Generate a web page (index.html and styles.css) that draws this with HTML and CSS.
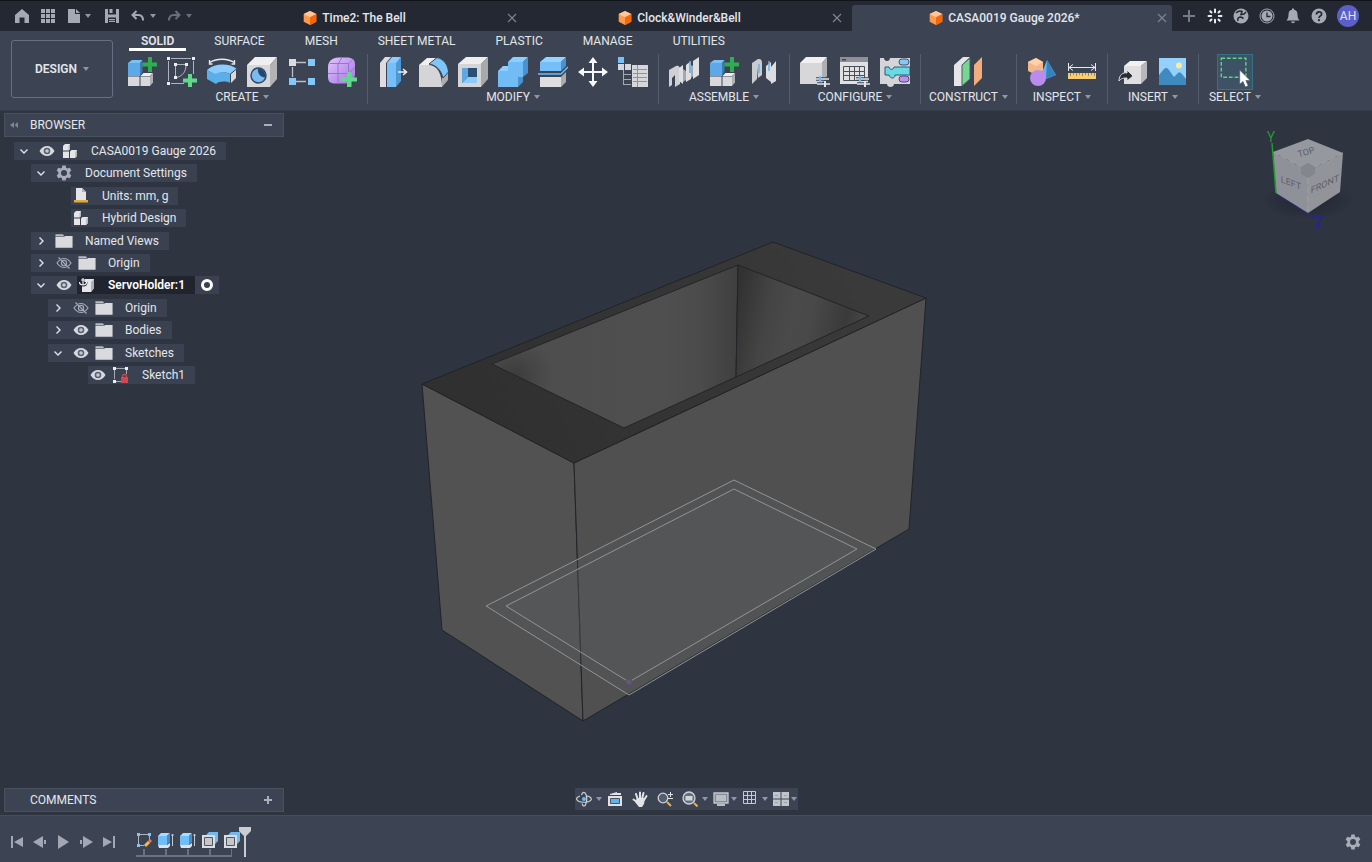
FILE: index.html
```html
<!DOCTYPE html>
<html lang="en">
<head>
<meta charset="utf-8">
<title>CASA0019 Gauge 2026*</title>
<link rel="stylesheet" href="styles.css">
</head>
<body>
<svg class="defs" aria-hidden="true">
  <defs>
    <linearGradient id="gPurple" x1="0" y1="0" x2="1" y2="1"><stop offset="0" stop-color="#e2c5ff"/><stop offset="1" stop-color="#a274e0"/></linearGradient>
  </defs>
  <symbol id="doc" viewBox="0 0 14 16"><path fill="#ff9a4d" d="M7 1l6.300 3v7.800L7 15 .7 11.800V4z"/><path fill="#ffc79b" d="M7 1l6.300 3L7 7.300.7 4z"/><path fill="#f4680b" d="M7 7.300L13.300 4v7.800L7 15z"/></symbol>
  <symbol id="eye" viewBox="0 0 16 12"><path fill="#d6d9df" d="M.5 6C2.500 2.600 5 1 8 1s5.500 1.600 7.500 5C13.500 9.400 11 11 8 11S2.500 9.400.5 6z"/><circle cx="8" cy="6" r="3.300" fill="#596170"/><circle cx="8" cy="6" r="1.800" fill="#c3c7cf"/></symbol>
  <symbol id="eyeoff" viewBox="0 0 16 12"><path fill="none" stroke="#a3a9b4" stroke-width="1.200" d="M1 6c2-3 4.300-4.500 7-4.500S13 3 15 6c-2 3-4.300 4.500-7 4.500S3 9 1 6zM2.500.5l11 11"/><circle cx="8" cy="6" r="2.600" fill="none" stroke="#a3a9b4" stroke-width="1.200"/></symbol>
  <symbol id="folder" viewBox="0 0 16 14"><path fill="#b7bac0" d="M.5 1h6.500l1.500 2H.5z"/><path fill="#d9dadd" d="M.5 3.600H8l1-1h6.500V13H.5z"/></symbol>
  <symbol id="down" viewBox="0 0 10 10"><path fill="none" stroke="#dfe2e8" stroke-width="1.400" d="M1.500 3.500L5 7l3.500-3.500"/></symbol>
  <symbol id="right" viewBox="0 0 10 10"><path fill="none" stroke="#dfe2e8" stroke-width="1.400" d="M3.500 1.500L7 5 3.500 8.500"/></symbol>
  <symbol id="gear" viewBox="0 0 16 16"><path fill="#a9adb9" fill-rule="evenodd" d="M6.400.5h3.200l.5 2.300 1.300.8 2.300-.8 1.600 2.800L13.600 7.200v1.600l1.700 1.600-1.600 2.800-2.300-.8-1.300.8-.5 2.300H6.400l-.5-2.300-1.300-.8-2.300.8L.7 10.400l1.700-1.600V7.200L.7 5.600l1.600-2.800 2.300.8 1.300-.8zM8 5a3 3 0 100 6 3 3 0 000-6z"/></symbol>
  <symbol id="cubes" viewBox="0 0 16 16"><path fill="#e6e6e8" d="M1 3l2-2h5v5L6.500 7.500H1zM1 8.500h6V15H1zM8 8.500L9.500 7H15v6l-2 2H8z"/><path fill="#b4b7bd" d="M6.500 3L8 1v5L6.500 7.500zM13.200 9L15 7v6l-1.800 2z"/></symbol>
  <symbol id="component" viewBox="0 0 30 30"><path fill="#7cc0f5" d="M1 6l4-3h10.500L13 6z"/><path fill="#5ba9e6" d="M1 6h12v13H1z"/><path fill="#3a7bb2" d="M13 6l2.500-3v12L13 19z"/><path fill="#d9d9db" d="M1 19.500h11.500V29H1zM13.500 19.500H23V29h-9.500z"/><path fill="#eeeeef" d="M13.500 19l3-3H26l-3 3z"/><path fill="#aeb0b5" d="M23 19.500l3-3.500v9.500L23 29z"/><path fill="#2fae4f" d="M21 0h4v5.500h5.500v4H25V15h-4V9.500h-5.500v-4H21z"/></symbol>
  <symbol id="sliders" viewBox="0 0 14 12"><path stroke="#3c4453" stroke-width="3.500" d="M0 4h14M1 9h13"/><path stroke="#e4e5e8" stroke-width="1.400" d="M0 4h13M1 9h13"/><path stroke="#71bdf5" stroke-width="2" d="M4 1v6"/><path stroke="#e4e5e8" stroke-width="2" d="M9 6v6"/></symbol>
  <symbol id="extrude" viewBox="0 0 16 16"><path fill="#e1e2e5" d="M0 13h9l3-2v3l-2 2H1z"/><path fill="#71bdf5" d="M0 4h9v9H0z"/><path fill="#a9dcff" d="M0 4l3-3h9L9 4z"/><path fill="#458dc7" d="M9 4l3-3v9l-3 3z"/><path stroke="#c4c8d0" d="M14.500 2v12M13.500 3.500l1-1.500 1 1.500" fill="none"/></symbol>
  <symbol id="shell" viewBox="0 0 16 16"><path fill="#71b9ee" d="M4 3l3-3h9v9l-3 3V3z"/><path fill="#dcdde0" d="M0 3h13v13H0z"/><path fill="#c5c7cb" stroke="#505762" d="M2.500 5.500h8v8h-8z"/></symbol>
</svg>

<header class="titlebar">
  <nav class="quick" aria-label="Quick access">
    <button class="ib" aria-label="Home"><svg viewBox="0 0 16 16"><path d="M8 1l7 6v8h-4.500V9.500h-5V15H1V7z"/></svg></button>
    <button class="ib" aria-label="Data panel"><svg viewBox="0 0 16 16"><path d="M1 1h4v4H1zm5 0h4v4H6zm5 0h4v4h-4zM1 6h4v4H1zm5 0h4v4H6zm5 0h4v4h-4zM1 11h4v4H1zm5 0h4v4H6zm5 0h4v4h-4z"/></svg></button>
    <button class="ib drop" aria-label="File"><svg viewBox="0 0 16 16"><path d="M2 1h7v5h5v9H2zM10 1l4 4h-4z"/></svg><i class="caret"></i></button>
    <button class="ib" aria-label="Save"><svg viewBox="0 0 16 16"><path fill-rule="evenodd" d="M1 1h14v14H1zm3 0v5.500h8V1zm0 14h8V9.500H4z"/><path d="M5.500 1h3v4h-3zM5 11h6v1.200H5zm0 2h6v1H5z"/></svg></button>
    <button class="ib drop undo" aria-label="Undo"><svg viewBox="0 0 16 16"><path fill="none" stroke="currentColor" stroke-width="2" d="M3 7h5.500c3 0 4.500 2 4.500 5.500M6.500 3L2.500 7l4 4"/></svg><i class="caret"></i></button>
    <button class="ib drop redo" aria-label="Redo"><svg viewBox="0 0 16 16"><path fill="none" stroke="currentColor" stroke-width="2" d="M13 7H7.500C4.500 7 3 9 3 12.500M9.500 3l4 4-4 4"/></svg><i class="caret"></i></button>
  </nav>
  <div class="files" role="tablist">
    <div class="file"><button class="name" role="tab"><svg><use href="#doc"/></svg>Time2: The Bell</button><button class="x" aria-label="Close Time2"><svg viewBox="0 0 10 10"><path d="M1 1l8 8M9 1L1 9"/></svg></button></div>
    <div class="file"><button class="name" role="tab"><svg><use href="#doc"/></svg>Clock&amp;Winder&amp;Bell</button><button class="x" aria-label="Close Clock"><svg viewBox="0 0 10 10"><path d="M1 1l8 8M9 1L1 9"/></svg></button></div>
    <div class="file on"><button class="name" role="tab" aria-selected="true"><svg><use href="#doc"/></svg>CASA0019 Gauge 2026*</button><button class="x" aria-label="Close Gauge"><svg viewBox="0 0 10 10"><path d="M1 1l8 8M9 1L1 9"/></svg></button></div>
  </div>
  <nav class="account" aria-label="Account">
    <button class="ib dim" aria-label="New design"><svg viewBox="0 0 16 16"><path d="M7 2h2v5h5v2H9v5H7V9H2V7h5z"/></svg></button>
    <button class="ib" aria-label="Assistant"><svg viewBox="0 0 16 16" fill="none" stroke="#eceef1" stroke-width="2" stroke-linecap="round"><path d="M8 1.500v2.800M11.500 4.500l1.200-1.200M11.800 8h2.700M11.500 11.500l1.200 1.200M8 11.700v2.800M4.500 11.500l-1.200 1.200M1.500 8h2.700M4.500 4.500L3.300 3.300"/></svg></button>
    <button class="ib" aria-label="Extensions"><svg viewBox="0 0 16 16"><circle cx="8" cy="8" r="7.500"/><path stroke="#232832" stroke-width="1.500" fill="none" d="M3 5c2-2 4-2.500 6-1.500l-1 3 3-.5 2-2M5 13c-1-3 1-4 3-4M8 9l2.500 1.500"/></svg></button>
    <button class="ib" aria-label="Job status"><svg viewBox="0 0 16 16"><circle cx="8" cy="8" r="7" fill="none" stroke="currentColor"/><circle cx="8" cy="8" r="5.500"/><path fill="none" stroke="#232832" stroke-width="1.300" d="M8 4.500V8.500h3.500"/></svg></button>
    <button class="ib" aria-label="Notifications"><svg viewBox="0 0 16 16"><path d="M7 .5h2v1.300c2.500.5 3.500 2.200 3.500 4.700 0 3 .7 4.500 2 6H1.500c1.300-1.500 2-3 2-6C3.500 4 4.500 2.300 7 1.800zM6 13.500h4c-.3 2.200-3.700 2.200-4 0z"/></svg></button>
    <button class="ib" aria-label="Help"><svg viewBox="0 0 16 16"><circle cx="8" cy="8" r="7.500"/><path fill="none" stroke="#232832" stroke-width="1.800" d="M5.500 6.500C5.500 3 10.800 3 10.600 6.200 10.500 7.800 8 8 8 10"/><circle cx="8" cy="12.200" r="1.100" fill="#232832"/></svg></button>
    <button class="avatar">AH</button>
  </nav>
</header>

<section class="ribbon">
  <button class="design">DESIGN<i class="caret"></i></button>
  <div class="panel">
    <nav class="modes" role="tablist">
      <button class="on" role="tab" aria-selected="true">SOLID</button><button role="tab">SURFACE</button><button role="tab">MESH</button><button role="tab">SHEET METAL</button><button role="tab">PLASTIC</button><button role="tab">MANAGE</button><button role="tab">UTILITIES</button>
    </nav>
    <div class="groups">
      <div class="group"><div class="tools">
        <button aria-label="New component"><svg><use href="#component"/></svg></button>
        <button aria-label="Create sketch"><svg viewBox="0 0 30 30"><path fill="none" stroke="#aeb4be" d="M4 1.500h20M1.500 4v20M4 26.500h13M26.500 4v13M8.500 7.500v13M10 7.500h9c0 7-3 11-9 13"/><path fill="#eceef1" d="M0 0h3v3H0zM25 0h3v3h-3zM0 25h3v3H0zM7 6h3v3H7zM18 6h3v3h-3zM7 19h3v3H7z"/><path fill="#5fd98a" d="M21 17h4v4.500h5v4h-5V30h-4v-4.500h-5v-4h5z"/></svg></button>
        <button aria-label="Extrude"><svg viewBox="0 0 30 30"><path fill="#8ccbff" d="M0 13C8 6 22 6 30 12l-7 5c-4-2-11-2-14.500 1z"/><path fill="#5aaeea" d="M0 13l8.500 4C12 14.500 18 14.500 23 17v9c-4-2-11-2-14 1L0 22z"/><path fill="#d9d9db" stroke="#3f444f" d="M23.500 17l6-5v9l-6 6z"/><path fill="none" stroke="#e8eaee" stroke-width="1.300" d="M2 6c7-5 19-5 26 0M2.500 3v4h3M27.500 3v4h-3"/></svg></button>
        <button aria-label="Hole"><svg viewBox="0 0 30 30"><path fill="#efeff0" d="M0 8l8-8h22l-7 8z"/><path fill="#d8d8da" d="M0 8h23v22H0z"/><path fill="#b3b3b6" d="M23 8l7-8v22l-7 8z"/><circle cx="11.500" cy="18.500" r="7.500" fill="#79bdf0" stroke="#304a66" stroke-width="1.500"/><path fill="#28486b" d="M11 11.500a7 7 0 017 9c-4 0-8-4-7-9z"/></svg></button>
        <button aria-label="Pattern"><svg viewBox="0 0 30 30"><path fill="none" stroke="#b9bec7" stroke-width="1.300" d="M9 5.500h10M9 24.500h10M5.500 10v10"/><path fill="#dadbdd" d="M2 2h7v7H2z"/><path fill="#83c8fb" d="M21 2h7v7h-7zM2 21h7v7H2zM21 21h7v7h-7z"/></svg></button>
        <button aria-label="Create form"><svg viewBox="0 0 30 30"><path fill="url(#gPurple)" d="M1 10c0-6 5-9.500 10-9.500h9c5 0 8 2 8 7v9c0 6-4 10-10 10H8c-5 0-7-2-7-7z"/><path fill="none" stroke="#9a72cf" d="M1 16.500h20l7-6M11 27V7l4-6.500M3 6.500h19l4-4M21.500 26V6.500"/><path fill="#5fd98a" d="M20 15h4.500v5.500H30v4h-5.500V30H20v-5.500h-5.500v-4H20z"/></svg></button>
      </div><button class="label">CREATE<i class="caret"></i></button></div>

      <div class="group"><div class="tools">
        <button aria-label="Press pull"><svg viewBox="0 0 30 30"><path fill="#dddde0" d="M2 6l5-6h6L8 6v24H2z"/><path fill="#8ccbff" d="M9 6l5-6h9l-4 6z"/><path fill="#76bff8" d="M9 6h9v24H9z"/><path fill="#4e98d4" d="M18 6l5-6v24l-5 6z"/><path fill="none" stroke="#eef0f3" stroke-width="1.500" d="M20 15h8M25 12l3.500 3L25 18"/></svg></button>
        <button aria-label="Fillet"><svg viewBox="0 0 30 30"><path fill="#efeff0" d="M1 8l8-7h10l-8 7z"/><path fill="#d5d5d7" d="M1 8h9c9 0 14 8 14 22H1z"/><path fill="#adadb1" d="M24 21l6-7v9l-6 7z"/><path fill="#7fc5fa" stroke="#3c4453" d="M11 7l8-6.500C26 2 30 8 30.500 15L25 21C23 13 18 8 11 7z"/></svg></button>
        <button aria-label="Shell"><svg viewBox="0 0 30 30"><path fill="#eeeeef" d="M0 7l8-7h22l-7 7z"/><path fill="#d5d5d7" d="M0 7h23v23H0z"/><path fill="#a9a9ac" d="M23 7l7-7v22l-7 8z"/><path fill="#2b4f73" d="M4 11h15v15H4z"/><path fill="#5fa8df" d="M4 11h6v9l-6 6z"/><path fill="#8ccbff" d="M10 20h9v6H4z"/></svg></button>
        <button aria-label="Combine"><svg viewBox="0 0 30 30"><path fill="#8dceff" d="M10 5l5-5h15l-5 5zM0 14l5-5h5v5z"/><path fill="#72bcf5" d="M10 5h15v15h-5v10H0V14h10z"/><path fill="#4792cf" d="M25 5l5-5v16l-5 4zM20 20h5v5l-5 5z"/></svg></button>
        <button aria-label="Split body"><svg viewBox="0 0 30 30"><path fill="#97d3ff" d="M2 5l6-5h20l-5 5z"/><path fill="#75bef7" d="M2 5h21v9H2z"/><path fill="#4792cf" d="M23 5l5-5v9l-5 5z"/><path fill="none" stroke="#6abcf5" stroke-width="1.500" d="M0 17h23l7-7"/><path fill="#dedee0" d="M2 20h21v10H2z"/><path fill="#ababaf" d="M23 20l5-5v10l-5 5z"/></svg></button>
        <button aria-label="Move"><svg viewBox="0 0 30 30"><path fill="none" stroke="#f6f7f8" stroke-width="2" d="M15 4v22M4 15h22"/><path fill="#f6f7f8" d="M15 0l4.500 6h-9zM15 30l4.500-6h-9zM0 15l6-4.500v9zM30 15l-6-4.500v9z"/></svg></button>
        <button aria-label="Manage"><svg viewBox="0 0 30 30"><path fill="#78c1f6" d="M0 0h6v6H0z"/><path fill="#d6d7da" d="M0 7h6v6H0zM7 7h6v6H7zM14 8h16v22H14z"/><path fill="none" stroke="#a4a9b3" d="M5.500 13v15M5 17.500h8M5 22.500h8M5 27.500h8"/><path stroke="#8e939b" d="M15 12.500h14M15 16.500h14M15 20.500h14M15 24.500h14M19.500 8v22"/></svg></button>
      </div><button class="label">MODIFY<i class="caret"></i></button></div>

      <div class="group"><div class="tools">
        <button aria-label="Joint"><svg viewBox="0 0 30 30"><path fill="#cfd0d3" d="M0 13l7-4c3-1 4 1 4 4v14l-5 3V18l-3 3v7l-3 2z"/><path fill="#dedfe1" d="M10 11l4-3v19l-4-3zM17 8l5-4v18l-5 3zM24 4l6-4v18l-6 4z"/><path fill="#a5a8ae" d="M14 12l3 2v9l-3 2zM22 8l2 1v10l-2 2z"/><path stroke="#58a6e5" stroke-width="1.500" d="M21 4v12"/></svg></button>
        <button aria-label="Assemble component"><svg><use href="#component"/></svg></button>
        <button aria-label="Joint origin"><svg viewBox="0 0 30 30"><path fill="#c9cbce" d="M3 6l6-4c4 0 4 2 4 5v11l-4 3V10l-1 12-5 5z"/><path fill="#dcdde0" d="M17 9l5-4v20l-5-4zM22 10l5-6v20l-5 3z"/><path stroke="#66b2ed" stroke-width="1.500" d="M10 7v9M20 4v10"/></svg></button>
      </div><button class="label">ASSEMBLE<i class="caret"></i></button></div>

      <div class="group"><div class="tools">
        <button aria-label="Configure"><svg viewBox="0 0 30 30"><path fill="#f0f0f1" d="M0 6l6-6h21l-5 6z"/><path fill="#d7d7d9" d="M0 6h22v21H0z"/><path fill="#afb0b3" d="M22 6l5-6v19l-5 8z"/><use href="#sliders" x="16" y="18" width="14" height="12"/></svg></button>
        <button aria-label="Configuration table"><svg viewBox="0 0 30 30"><path fill="#e0e1e3" d="M0 0h28v27H0z"/><path fill="#8c9097" d="M0 0h28v5H0z"/><path fill="#40454e" d="M2 2h4v1.500H2z"/><path fill="none" stroke="#4a4f59" d="M3.500 9.500h21v14h-21zM4 14.500h20M4 18.500h20M9.500 9v14M14.500 9v14M19.500 9v14"/><use href="#sliders" x="16" y="18" width="14" height="12"/></svg></button>
        <button aria-label="Rules"><svg viewBox="0 0 30 30"><path fill="#d3d5d9" d="M0 1h4c0 4 6 4 6 0h20v26H14c0 4-7 4-7 0H0z"/><rect x="19" y="2" width="10" height="6" rx="3" fill="#86c7f5" stroke="#40506a"/><rect x="19" y="19" width="10" height="6" rx="3" fill="#bb91ee" stroke="#554572"/><path fill="#69d9e3" stroke="#35566a" d="M5 10h4c0 3 5 3 5 0h16v8H15c0 4-5 4-6 0H5z"/></svg></button>
      </div><button class="label">CONFIGURE<i class="caret"></i></button></div>

      <div class="group plane"><div class="tools">
        <button aria-label="Offset plane"><svg viewBox="0 0 30 30"><path fill="#e5e5e7" d="M1 8l9-8h7L9 8v21H1z"/><path fill="#77d696" stroke="#4a5a5c" d="M9 8l8-7v21l-8 7z"/><path fill="#f2ad7e" d="M21 8l8-8v21l-8 8z"/></svg></button>
      </div><button class="label">CONSTRUCT<i class="caret"></i></button></div>

      <div class="group"><div class="tools">
        <button aria-label="Analysis"><svg viewBox="0 0 30 30"><path fill="#f5b789" d="M1 5l8-4 7 4v9l-7 4-8-4z"/><path fill="#ffd1ab" d="M1 5l8-4 7 4-7 4z"/><path fill="#67b5ef" d="M20 3l9 15-10 4-5-4z"/><path fill="#3782bd" d="M20 3l9 15-10 4z"/><circle cx="11" cy="21" r="8" fill="#b98ced"/></svg></button>
        <button aria-label="Measure"><svg viewBox="0 0 30 30"><path fill="none" stroke="#e6e8ec" d="M1.500 6v8M28.500 6v8M2 10.500h26M6 7.500l-4 3 4 3M24 7.500l4 3-4 3"/><path fill="#f5cc72" d="M1 16h28v6H1z"/><path stroke="#a08a55" d="M3.500 16v3M6.500 16v2M9.500 16v3M12.500 16v2M15.500 16v3M18.500 16v2M21.500 16v3M24.500 16v2M27.500 16v3"/></svg></button>
      </div><button class="label">INSPECT<i class="caret"></i></button></div>

      <div class="group"><div class="tools">
        <button aria-label="Insert derive"><svg viewBox="0 0 30 30"><path fill="#f1f1f2" d="M6 9l6-5h17l-6 5z"/><path fill="#dfdfe1" d="M6 9h17v18H6z"/><path fill="#b7b8bb" d="M23 9l6-5v17l-6 6z"/><path fill="#292d34" stroke="#dfdfe1" d="M1 24c0-6 4-9 8-8v-3l6 6-6 5v-3c-3 0-6 0-8 3z"/></svg></button>
        <button aria-label="Insert image"><svg viewBox="0 0 30 30"><path fill="#93d1fa" d="M1 1h27v27H1z"/><path fill="#3f8bc0" d="M1 18l5-6c2-2 4-1 5 1l5 7 4-4c2-1 3 0 4 1l4 5v6H1z"/><circle cx="21" cy="8.500" r="3" fill="#ffe99a"/></svg></button>
      </div><button class="label">INSERT<i class="caret"></i></button></div>

      <div class="group"><div class="tools">
        <button class="picked" aria-label="Select"><svg viewBox="0 0 36 36"><path fill="none" stroke="#5fd28a" stroke-width="1.500" stroke-dasharray="4 2" d="M3.500 3.500h26v20h-26z"/><path fill="#fff" stroke="#44515f" stroke-width=".6" d="M23 16v15l3.500-3 2.500 6 3-1.500-2.500-5.500H34z"/></svg></button>
      </div><button class="label">SELECT<i class="caret"></i></button></div>
    </div>
  </div>
</section>

<main class="viewport">
  <svg class="scene" viewBox="0 111 1372 704" role="img" aria-label="Servo holder model">
    <defs>
      <linearGradient id="topFace" gradientUnits="userSpaceOnUse" x1="500" y1="430" x2="860" y2="270"><stop offset="0" stop-color="#303030"/><stop offset="1" stop-color="#3a3a3a"/></linearGradient>
      <linearGradient id="wallA" gradientUnits="userSpaceOnUse" x1="492" y1="0" x2="738" y2="0"><stop offset="0" stop-color="#4d4d4d"/><stop offset=".7" stop-color="#4f4f4f"/><stop offset=".85" stop-color="#4b4b4b"/><stop offset="1" stop-color="#3f3f3f"/></linearGradient>
      <linearGradient id="wallB" gradientUnits="userSpaceOnUse" x1="737" y1="300" x2="860" y2="325"><stop offset="0" stop-color="#323232"/><stop offset=".25" stop-color="#444"/><stop offset=".45" stop-color="#4a4a4a"/><stop offset=".6" stop-color="#494949"/><stop offset=".88" stop-color="#3a3a3a"/><stop offset="1" stop-color="#444"/></linearGradient>
      <radialGradient id="corner" gradientUnits="userSpaceOnUse" cx="516" cy="376" r="38"><stop offset="0" stop-color="#303030" stop-opacity=".6"/><stop offset=".5" stop-color="#303030" stop-opacity=".25"/><stop offset="1" stop-color="#303030" stop-opacity="0"/></radialGradient>
    </defs>
    <g stroke="#222427" stroke-linejoin="round">
      <path fill="#525252" d="M422 384L574 463 583 721 442 630z"/>
      <path fill="#505050" d="M574 463L926 298 909 529 583 721z"/>
      <path fill="url(#topFace)" d="M773 242L926 298 574 463 422 384z"/>
      <path fill="url(#wallA)" d="M492 364L738 265 736 377 624 428z"/>
      <path fill="url(#corner)" stroke="none" d="M493 364L738 265 736 377 624 428z"/>
      <path fill="url(#wallB)" d="M738 265L869 316 736 377z"/>
    </g>
    <g fill="#5c5e66" fill-opacity=".2" stroke="#929496"><path d="M734 480L876 549 629 695 486 606z"/><path d="M734 489L857 549 629 682 506 606z"/></g>
    <circle cx="629" cy="682" r="3" fill="#625a72" stroke="#5a4f70"/>
  </svg>

  <aside class="browser">
    <div class="bar"><button class="fold" aria-label="Collapse"><svg viewBox="0 0 8 6"><path d="M4 0v6L0 3zM8 0v6L4.500 3z"/></svg></button><h2>BROWSER</h2><button class="sign" aria-label="Minimise"><svg viewBox="0 0 8 8"><path d="M0 3h8v2H0z"/></svg></button></div>
    <ul class="tree">
      <li><button class="tw"><svg><use href="#down"/></svg></button><button class="vis"><svg><use href="#eye"/></svg></button><svg class="ic"><use href="#cubes"/></svg><span>CASA0019 Gauge 2026</span></li>
      <li class="l1"><button class="tw"><svg><use href="#down"/></svg></button><svg class="ic wide"><use href="#gear"/></svg><span>Document Settings</span></li>
      <li class="l3"><svg class="ic" viewBox="0 0 16 16"><path fill="#e4e5e8" d="M3 0h6l4 4v8H3z"/><path fill="#aeb2b9" d="M9 0l4 4H9z"/><path fill="#e2a93c" d="M1 12h14v2.500H1z"/></svg><span>Units: mm, g</span></li>
      <li class="l3"><svg class="ic"><use href="#cubes"/></svg><span>Hybrid Design</span></li>
      <li class="l1"><button class="tw"><svg><use href="#right"/></svg></button><svg class="ic wide"><use href="#folder"/></svg><span>Named Views</span></li>
      <li class="l1"><button class="tw"><svg><use href="#right"/></svg></button><button class="vis"><svg><use href="#eyeoff"/></svg></button><svg class="ic"><use href="#folder"/></svg><span>Origin</span></li>
      <li class="l1 active"><button class="tw"><svg><use href="#down"/></svg></button><button class="vis"><svg><use href="#eye"/></svg></button><div class="chosen"><svg class="ic" viewBox="0 0 16 16"><path fill="#e6e6e8" d="M3 5l3-3h9v9l-3 4H3z"/><path fill="#aeb1b7" d="M12 5l3-3v9l-3 4z"/><path fill="none" stroke="#1f242e" stroke-width="3" d="M4 1v7M1 5c0 4 6 4 6 0"/><path fill="none" stroke="#f3f4f6" stroke-width="1.200" d="M4 1v7M2 3h4M.5 5c0 4 7 4 7 0"/></svg><span>ServoHolder:1</span></div><label class="activate"><input type="radio" checked aria-label="Activate ServoHolder"></label></li>
      <li class="l2"><button class="tw"><svg><use href="#right"/></svg></button><button class="vis"><svg><use href="#eyeoff"/></svg></button><svg class="ic"><use href="#folder"/></svg><span>Origin</span></li>
      <li class="l2"><button class="tw"><svg><use href="#right"/></svg></button><button class="vis"><svg><use href="#eye"/></svg></button><svg class="ic"><use href="#folder"/></svg><span>Bodies</span></li>
      <li class="l2"><button class="tw"><svg><use href="#down"/></svg></button><button class="vis"><svg><use href="#eye"/></svg></button><svg class="ic"><use href="#folder"/></svg><span>Sketches</span></li>
      <li class="l4"><button class="vis slim"><svg><use href="#eye"/></svg></button><svg class="ic wide" viewBox="0 0 16 16"><path fill="none" stroke="#a3a9b4" d="M3 1.500h9M1.500 3v9M3 14.500h5M13.500 3v4"/><path fill="#eceef1" d="M0 0h3v3H0zM12 0h3v3h-3zM0 13h3v3H0z"/><path fill="#d0484d" d="M8 10h7v6H8z"/><path fill="none" stroke="#d0484d" stroke-width="1.300" d="M9.500 10c0-3.500 4-3.500 4 0"/></svg><span>Sketch1</span></li>
    </ul>
  </aside>

  <svg class="viewcube" viewBox="1252 120 120 120" role="img" aria-label="View cube">
    <defs><radialGradient id="cubeShade"><stop offset="0" stop-color="#1b2029" stop-opacity=".7"/><stop offset="1" stop-color="#1b2029" stop-opacity="0"/></radialGradient></defs>
    <ellipse cx="1308" cy="200" rx="46" ry="20" fill="url(#cubeShade)"/>
    <path fill="none" stroke="#24249a" d="M1276 193l42 27"/>
    <path fill="#96989f" d="M1308 139l35 14-35 18-35-19z"/>
    <path fill="#8f9198" d="M1273 152l35 19v42l-32-20z"/>
    <path fill="#92949a" d="M1343 153l-35 18v42l32-21z"/>
    <path fill="#83868e" d="M1301 167l7-4 7 4v7l-7 4-7-4z"/>
    <path fill="none" stroke="#9ea0a6" stroke-dasharray="6 3" d="M1273 152l28 15M1343 153l-28 14M1308 178v35"/>
    <path stroke="#1f9a2b" stroke-width="1.500" d="M1272 143l4 50"/>
    <g class="face"><text transform="translate(1307 155) rotate(-16)">TOP</text><text transform="translate(1291 186) skewY(20)">LEFT</text><text transform="translate(1325 187) skewY(-25)">FRONT</text></g>
    <text class="axis y" x="1271" y="142">Y</text><text class="axis z" x="1319" y="227">Z</text>
  </svg>

  <section class="comments bar"><h2>COMMENTS</h2><button class="sign" aria-label="Add comment"><svg viewBox="0 0 8 8"><path d="M3 0h2v3h3v2H5v3H3V5H0V3h3z"/></svg></button></section>

  <nav class="navbar" aria-label="Navigation">
    <button class="more" aria-label="Orbit"><svg viewBox="0 0 16 16"><g fill="none" stroke="#cfd2d8" stroke-width="1.200"><path d="M4 5C1 6 0 7.500 1 9c2 3 12 3 14 0 1-2-1-3.500-4-4M6 12.500c1 3.500 3 3.500 4 0 1-3 1-6 0-9C9 .5 6.500.5 5.500 4"/></g><circle cx="8" cy="8" r="2" fill="#68baf0"/></svg><i class="caret"></i></button>
    <button aria-label="Look at"><svg viewBox="0 0 16 16"><path fill="#e0e1e4" d="M1 5h14v10H1zM3 3l7-2v1h4v2H3z"/><path fill="#5fb4ee" stroke="#4a5361" d="M3.500 7.500h9v5h-9z"/></svg></button>
    <button aria-label="Pan"><svg viewBox="0 0 16 16"><path fill="none" stroke="#e1e3e7" stroke-width="2" stroke-linecap="round" d="M6 9L4 3M8 8V1.500M10 8l1.500-6M12 9l2.500-4M5 11L1.500 8.500"/><path fill="#e1e3e7" d="M5 7h8l-1 6-2 3H7l-4-5z"/></svg></button>
    <button aria-label="Zoom"><svg viewBox="0 0 16 16"><circle cx="6" cy="7" r="4.800" fill="#55606e" stroke="#d0d3d9" stroke-width="1.300"/><path stroke="#e2b160" stroke-width="2" d="M10 11l4 4"/><path stroke="#e1e3e7" d="M11 3.500h5M13.500 1v5M11 7.500h5"/></svg></button>
    <button class="more" aria-label="Fit"><svg viewBox="0 0 16 16"><circle cx="7" cy="7" r="6" fill="#65707e" stroke="#d0d3d9" stroke-width="1.300"/><path fill="#d2d5da" d="M3.500 5h7v4.500h-7z"/><path stroke="#e2b160" stroke-width="2" d="M12 12l3.500 3.500"/></svg><i class="caret"></i></button>
    <button class="more near" aria-label="Display settings"><svg viewBox="0 0 16 16"><path fill="#858b95" stroke="#c5c8cf" stroke-width="1.300" d="M1 2h14v10H1z"/><path fill="#b9bdc5" d="M3 4h10v6H3zM4 13h8v2H4z"/></svg><i class="caret"></i></button>
    <button class="more" aria-label="Grid"><svg viewBox="0 0 16 16"><path fill="none" stroke="#c5c8cf" d="M1.500.5h12v12h-12zM1 4.500h12M1 8.500h12M5.500 1v12M9.500 1v12"/></svg><i class="caret"></i></button>
    <button class="more near" aria-label="Viewports"><svg viewBox="0 0 16 16"><path fill="#c1c4cb" d="M0 1h7.500v6.500H0zM8.500 1H16v6.500H8.500zM0 8.500h7.500V15H0zM8.500 8.500H16V15H8.500z"/><path stroke="#9aa0aa" d="M2 4.500h3M11 4.500h3M2 11.500h3M11 11.500h3"/></svg><i class="caret"></i></button>
  </nav>
</main>

<footer class="timeline">
  <div class="play">
    <button aria-label="Start"><svg viewBox="0 0 14 14"><path d="M1 1h2v12H1zM13 2v10L4 7z"/></svg></button>
    <button aria-label="Back"><svg viewBox="0 0 14 14"><path d="M10 1v12L0 7zM11 5h2v4h-2z"/></svg></button>
    <button aria-label="Play"><svg viewBox="0 0 14 14"><path d="M2 0l11 7-11 7z"/></svg></button>
    <button aria-label="Forward"><svg viewBox="0 0 14 14"><path d="M4 1v12l10-6zM1 5h2v4H1z"/></svg></button>
    <button aria-label="End"><svg viewBox="0 0 14 14"><path d="M13 1h-2v12h2zM1 2v10l9-5z"/></svg></button>
  </div>
  <div class="history">
    <button aria-label="Sketch feature"><svg viewBox="0 0 16 16"><path fill="none" stroke="#aeb5bf" d="M2 2.500h11M2.500 3v10M3 13.500h5M13.500 3v5"/><path fill="#7cc4f8" d="M1 1h3v3H1zM12 1h3v3h-3zM1 12h3v3H1z"/><path stroke="#f0bd57" stroke-width="3" d="M9 14l4-4"/><path stroke="#ed7466" stroke-width="3" d="M13 10l2-2"/></svg></button>
    <button aria-label="Extrude 1"><svg><use href="#extrude"/></svg></button>
    <button aria-label="Extrude 2"><svg><use href="#extrude"/></svg></button>
    <button aria-label="Shell 1"><svg><use href="#shell"/></svg></button>
    <button aria-label="Shell 2"><svg><use href="#shell"/></svg></button>
    <svg class="marker" viewBox="0 0 12 30"><path fill="#c9ccd2" d="M0 0h12v4L7 9v21H5V9L0 4z"/></svg>
  </div>
  <button class="settings" aria-label="Settings"><svg><use href="#gear"/></svg></button>
</footer>
</body>
</html>
```
FILE: styles.css
```css
* { box-sizing: border-box; }
body {
  margin: 0;
  min-height: 100vh;
  display: flex;
  flex-direction: column;
  background: #2e3440;
  color: #e3e6eb;
  font: 12px/16px Roboto, "Noto Sans", sans-serif;
}
.defs { position: absolute; width: 0; height: 0; }
button { padding: 0; border: 0; background: none; color: inherit; font: inherit; }
svg { display: block; }
h2 { margin: 0; font: inherit; }
.caret {
  flex: none;
  border: 3px solid transparent;
  border-top: 4px solid #9096a2;
  border-bottom: 0;
}

/* Title bar */
.titlebar {
  height: 31px;
  display: flex;
  background: #232832;
  border-top: 1px solid #101319;
}
.quick { width: 202px; padding-left: 14px; display: flex; align-items: center; gap: 10px; color: #a5a9b3; }
.ib { width: 16px; display: flex; align-items: center; }
.ib svg { width: 16px; height: 16px; flex: none; fill: currentColor; }
.drop { width: 28px; gap: 3px; }
.drop .caret { border-width: 4px 3px 0; }
.undo, .redo { width: 26px; gap: 4px; }
.redo { color: #686e7a; }
.redo .caret { border-top-color: #686e7a; }
.files { flex: 1; display: grid; grid-template-columns: repeat(3, 1fr); gap: 5px; padding-top: 4px; }
.file { display: flex; align-items: center; border-radius: 3px 3px 0 0; padding-right: 5px; }
.file.on { background: #3c4453; }
.name { flex: 1; display: flex; justify-content: center; align-items: center; gap: 5px; font-weight: 500; }
.name svg { width: 14px; height: 16px; }
.x svg { width: 10px; height: 10px; fill: none; stroke: #7d838f; stroke-width: 1.2; }
.account { width: 200px; padding-left: 9px; display: flex; align-items: center; gap: 10px; color: #a5a9b3; }
.dim { color: #747a86; }
.avatar { width: 22px; height: 22px; border-radius: 50%; background: #5b5fc7; color: #e4e5fa; }

/* Ribbon */
.ribbon { display: flex; height: 80px; background: #3c4453; border-bottom: 1px solid #343b48; padding-left: 11px; }
.design {
  width: 102px;
  height: 58px;
  margin-top: 9px;
  display: flex;
  align-items: center;
  justify-content: center;
  gap: 6px;
  border: 1px solid #667083;
  border-radius: 3px;
  font-weight: 600;
}
.panel { flex: 1; padding-left: 14px; }
.modes { display: flex; gap: 16px; height: 20px; padding-left: 2px; }
.modes button { padding: 2px 12px 0; border-bottom: 3px solid transparent; }
.modes .on { border-color: #fff; font-weight: 600; }
.groups { display: flex; padding-top: 3px; }
.group { padding: 0 10px; height: 50px; border-left: 1px solid #535c6b; }
.group:first-child { padding-left: 0; border: 0; }
.group.plane { padding: 0 8px; }
.tools { height: 35px; display: flex; justify-content: center; align-items: center; gap: 10px; }
.tools svg { width: 30px; height: 30px; }
.tools .picked { background: #3d5265; border: 1px solid #357184; }
.picked svg { width: 34px; height: 34px; }
.label { display: flex; align-items: center; gap: 4px; margin: 0 auto; }

/* Canvas and overlay panels */
.viewport {
  flex: 1;
  position: relative;
  display: grid;
  grid-template-columns: 1fr auto 1fr;
  grid-template-rows: 1fr auto;
  padding: 2px 4px 3px;
}
.scene { position: absolute; inset: 0; width: 100%; height: 100%; }
.browser { grid-column: 1; width: 280px; position: relative; }
.bar {
  width: 280px;
  height: 24px;
  display: flex;
  align-items: center;
  padding: 0 11px 0 5px;
  background: #3c4453;
  border: 1px solid #485160;
}
.bar h2 { flex: 1; }
.fold { width: 20px; }
.fold svg { width: 8px; height: 6px; fill: #7d8593; }
.sign svg { width: 8px; height: 8px; fill: #a9aeb9; }
.comments { position: relative; grid-row: 2; padding-left: 25px; }
.tree {
  list-style: none;
  margin: 5px 0 0;
  padding: 0 0 0 10px;
  height: 242px;
  display: flex;
  flex-direction: column;
  align-items: flex-start;
  justify-content: space-between;
}
.tree li { height: 18px; display: flex; align-items: center; padding-right: 10px; background: #3a4251; }
.tree .l1 { margin-left: 17px; }
.tree .l2 { margin-left: 34px; }
.tree .l3 { margin-left: 57px; }
.tree .l4 { margin-left: 74px; }
.tw { width: 20px; }
.tw svg { width: 10px; height: 10px; margin: auto; }
.vis { width: 26px; }
.vis svg { width: 16px; height: 12px; margin: auto; }
.slim { width: 20px; }
.ic { width: 20px; height: 16px; }
.ic.wide { width: 26px; }
.tree span { margin-left: 11px; }
.wide + span { margin-left: 8px; }
.tree .active { padding: 0; }
.chosen { height: 18px; display: flex; align-items: center; padding-right: 10px; background: #1f242e; font-weight: 600; color: #fff; }
.activate { width: 24px; display: flex; justify-content: center; }
.activate input { appearance: none; width: 12px; height: 12px; margin: 0; border: 3px solid #fff; border-radius: 50%; }
.viewcube { position: absolute; top: 9px; right: 0; width: 120px; height: 120px; }
.face { font-size: 9px; text-anchor: middle; fill: #5c6069; }
.axis { font-size: 14px; text-anchor: middle; }
.axis.y { fill: #1f9a2b; }
.axis.z { fill: #24249a; }
.navbar {
  position: relative;
  grid-row: 2;
  grid-column: 2;
  height: 22px;
  display: flex;
  align-items: center;
  gap: 9px;
  padding: 0 1px;
  background: #3c4453;
}
.navbar svg { width: 16px; height: 16px; flex: none; }
.more { display: flex; align-items: center; gap: 4px; }
.near { gap: 2px; }
.navbar .more { margin-right: -4px; }
.navbar .more:last-child { margin-right: 0; }

/* Timeline */
.timeline { height: 47px; display: flex; align-items: center; padding: 5px 11px 0 10px; background: #3c4453; border-top: 1px solid #454e5d; }
.play { display: flex; gap: 9px; }
.play svg { width: 14px; height: 14px; fill: #a3a7b3; }
.history { position: relative; display: flex; gap: 6px; margin-left: 20px; }
.history button svg { width: 16px; height: 16px; }
.history button { position: relative; height: 30px; padding-bottom: 2px; border-bottom: 2px solid transparent; }
.history::after { content: ""; position: absolute; left: 0; right: 8px; bottom: 0; height: 6px; border-bottom: 2px solid #697282; background: repeating-linear-gradient(to right, transparent 0 7px, #697282 7px 9px, transparent 9px 22px); }
.history .marker { position: absolute; right: -11px; top: 0; width: 12px; height: 30px; }
.settings { margin-left: auto; }
.settings svg { width: 16px; height: 16px; }
```
